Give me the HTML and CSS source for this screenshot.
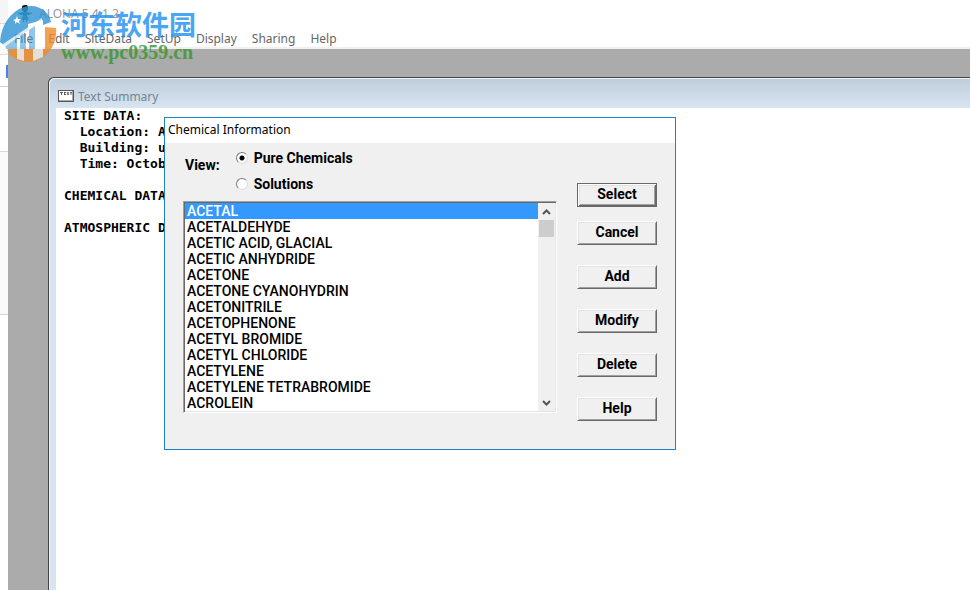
FILE: index.html
```html
<!DOCTYPE html>
<html lang="en">
<head>
    <meta charset="UTF-8">
    <meta name="viewport" content="width=device-width, initial-scale=1.0">
    <title>ALOHA 5.4.1.2</title>
    <link rel="stylesheet" href="styles.css">
</head>
<body>

    <!-- Page behind the application -->
    <div class="behind">
        <div class="behind-tabs"></div>
        <div class="behind-bar"></div>
        <div class="behind-page"><span class="behind-mark"></span></div>
        <div class="behind-panel"></div>
    </div>

    <main class="app">
        <header class="titlebar">
            <svg class="app-icon" width="16" height="18" viewBox="0 0 16 18">
                <path d="M5 1l2-1h3l1 2v3l-2 2H7L5 5z" fill="#10251c"/>
                <path d="M1 7l2 1 3-1h4l3 1 2-1v1l-3 2h-2v2H6v-2H4L1 8z" fill="#1d6e66"/>
                <path d="M6 11h4l2 3-2 1v2H9v-2H7v2H6v-2l-2-1z" fill="#218b63"/>
            </svg>
            <span>ALOHA 5.4.1.2</span>
        </header>
        <nav class="menu">
            <a href="#">File</a>
            <a href="#">Edit</a>
            <a href="#">SiteData</a>
            <a href="#">SetUp</a>
            <a href="#">Display</a>
            <a href="#">Sharing</a>
            <a href="#">Help</a>
        </nav>

        <div class="workspace">
            <section class="summary">
                <h2 class="summary-title">
                    <svg width="16" height="12" viewBox="0 0 16 12">
                        <path d="M0 0h16v12H0z" fill="#555"/>
                        <path d="M1 1h13v9H1z" fill="#fff"/>
                        <path d="M14 1h1v10H1v-1h13z" fill="#aaa"/>
                        <path d="M2 2.500h3M3.500 2v3M6 2.500h2M6 4.500h2M6.500 2v3M9 2l2 3M11 2L9 5M12 2.500h2M13 2v3" stroke="#444" stroke-width=".8" fill="none"/>
                    </svg>
                    Text Summary
                </h2>
<pre class="summary-text">SITE DATA:
  Location: ABERDEEN
  Building: unsheltered
  Time: October

CHEMICAL DATA:

ATMOSPHERIC DATA:</pre>
            </section>
        </div>
    </main>

    <!-- Chemical Information dialog -->
    <form class="dialog">
        <h1 class="dialog-title">Chemical Information</h1>
        <div class="dialog-body">
            <div class="chemicals">
                <div class="view" role="radiogroup" aria-labelledby="viewLabel">
                    <span class="view-label" id="viewLabel">View:</span>
                    <div class="view-options">
                        <label for="pure"><input type="radio" id="pure" name="view" checked>Pure Chemicals</label>
                        <label for="solutions"><input type="radio" id="solutions" name="view">Solutions</label>
                    </div>
                </div>
                <div class="list">
                    <select class="list-box" size="13" aria-label="Chemicals">
                        <option selected>ACETAL</option>
                        <option>ACETALDEHYDE</option>
                        <option>ACETIC ACID, GLACIAL</option>
                        <option>ACETIC ANHYDRIDE</option>
                        <option>ACETONE</option>
                        <option>ACETONE CYANOHYDRIN</option>
                        <option>ACETONITRILE</option>
                        <option>ACETOPHENONE</option>
                        <option>ACETYL BROMIDE</option>
                        <option>ACETYL CHLORIDE</option>
                        <option>ACETYLENE</option>
                        <option>ACETYLENE TETRABROMIDE</option>
                        <option>ACROLEIN</option>
                    </select>
                    <div class="scrollbar">
                        <svg width="15" height="17" viewBox="0 0 15 17"><path d="M4 11l3.500-3.500L11 11" fill="none" stroke="#555" stroke-width="2"/></svg>
                        <div class="scroll-thumb"></div>
                        <svg width="15" height="17" viewBox="0 0 15 17"><path d="M4 7l3.500 3.500L11 7" fill="none" stroke="#555" stroke-width="2"/></svg>
                    </div>
                </div>
            </div>
            <div class="actions">
                <div class="actions-main">
                    <button type="button" class="default">Select</button>
                    <button type="button">Cancel</button>
                </div>
                <button type="button">Add</button>
                <button type="button">Modify</button>
                <button type="button">Delete</button>
                <button type="button">Help</button>
            </div>
        </div>
    </form>

    <!-- Site watermark -->
    <div class="watermark">
        <svg width="58" height="58" viewBox="0 0 58 58">
            <path d="M0 38C2 14 18 2 31 2c11 0 19 8 20 16l-8 3v-5L28 20v6L5 42z" fill="#2f93d6"/>
            <path d="M5 41l12-9v13H6zM20 30h6v15h-6zM29 26l6-4v23h-6z" fill="#3c9bdc" fill-opacity=".7"/>
            <path d="M3 40L42 14v31h-7V21L3 44z" fill="#fff" fill-opacity=".8"/>
            <path d="M45 23l11 1c2 16-10 34-28 34-9 0-17-4-21-12l5-1h33z" fill="#f08c28"/>
            <path d="M17 45h7v12l-7-2zM33 45h10v8l-10 4z" fill="#f4ece6"/>
            <path d="M17 12l1 3 3 0-2 2 1 3-3-2-2 2v-3l-2-1 3-1z" fill="#fff"/>
        </svg>
        <div class="watermark-text">
            <span class="watermark-name" lang="zh">河东软件园</span>
            <span class="watermark-url">www.pc0359.cn</span>
        </div>
    </div>

</body>
</html>
```
FILE: styles.css
```css
* {
    box-sizing: border-box;
}

body {
    display: flex;
    height: 100vh;
    margin: 0;
    overflow: hidden;
    background-color: #fff;
    color: #000;
    font-family: "Noto Sans", "Open Sans", sans-serif;
    font-size: 12px;
}

h1, h2, pre {
    margin: 0;
    font-weight: normal;
}

/* Strip of the page behind */
.behind {
    display: flex;
    flex-direction: column;
    width: 8px;
}

.behind-tabs {
    height: 24px;
    background-color: #f5f5f5;
    border-bottom: 1px solid #ddd;
}

.behind-bar {
    height: 31px;
    background-color: #fafafa;
    border-bottom: 1px solid #ddd;
}

.behind-page {
    height: 97px;
    padding: 10px 0 0 6px;
    background: linear-gradient(#d0d0d0, #d0d0d0) 0 31px / 100% 1px no-repeat;
    border-bottom: 1px solid #d8d8d8;
}

.behind-mark {
    display: block;
    height: 13px;
    background-color: #4285f4;
}

.behind-panel {
    height: 163px;
    background-color: #fafafa;
    border-bottom: 1px solid #d8d8d8;
}

/* Application window */
.app {
    display: flex;
    flex: 1;
    flex-direction: column;
    min-width: 0;
}

.titlebar {
    display: flex;
    align-items: center;
    gap: 6px;
    height: 27px;
    padding-left: 9px;
    color: #999;
}

.menu {
    display: flex;
    gap: 15px;
    height: 22px;
    padding-left: 6px;
    border-bottom: 2px solid #f0f0f0;
    line-height: 23px;
}

.menu a {
    color: #666;
    text-decoration: none;
}

.workspace {
    display: flex;
    flex: 1;
    padding: 28px 0 0 40px;
    background-color: #ababab;
}

.summary {
    display: flex;
    flex: 1;
    flex-direction: column;
    padding-left: 7px;
    background: linear-gradient(#bfccda, #d7e4f2 30px);
    border-top: 1px solid #444;
    border-left: 1px solid #444;
    border-top-left-radius: 6px;
    box-shadow: inset 1px 1px #edf3f9;
}

.summary-title {
    display: flex;
    align-items: center;
    gap: 4px;
    height: 30px;
    padding: 6px 0 0 2px;
    color: #768390;
    font-size: 12px;
}

.summary-text {
    flex: 1;
    padding-left: 8px;
    background-color: #fff;
    font: bold 13px/16px "DejaVu Sans Mono", monospace;
}

/* Dialog */
.dialog {
    position: absolute;
    top: 117px;
    left: 164px;
    width: 512px;
    background-color: #f0f0f0;
    border: 1px solid #1c80cc;
    font-family: Roboto, Arial, sans-serif;
    font-weight: bold;
    font-size: 14px;
}

.dialog-title {
    height: 25px;
    padding-left: 3px;
    background-color: #fff;
    font: 12px/24px "Noto Sans", "Open Sans", sans-serif;
}

.dialog-body {
    display: flex;
    gap: 20px;
    padding: 2px 18px 28px;
}

.chemicals {
    flex: 1;
}

.view {
    display: flex;
    gap: 16px;
    height: 56px;
}

.view-label {
    padding-left: 2px;
    line-height: 40px;
}

.view-options label {
    display: flex;
    align-items: center;
    gap: 6px;
    height: 26px;
}

.view-options input {
    width: 12px;
    height: 12px;
    margin: 0;
    appearance: none;
    background-color: #fff;
    border: 1px solid;
    border-color: #777 #ddd #ddd #777;
    border-radius: 50%;
}

.view-options input:checked {
    background-image: radial-gradient(circle, #000 2px, transparent 3px);
}

.list {
    display: flex;
    height: 212px;
    padding: 1px;
    background-color: #fff;
    border: 1px solid;
    border-color: #a0a0a0 #fff #fff #a0a0a0;
    box-shadow: inset 1px 1px #696969, inset -1px -1px #e3e3e3;
}

.list-box {
    flex: 1;
    height: 208px;
    padding: 0;
    overflow: hidden;
    background: transparent;
    border: 0;
    border-radius: 0;
    outline: 0;
    color: #000;
    font: 14px/16px Roboto, Arial, sans-serif;
}

.list-box option {
    height: 16px;
    min-height: 16px;
    padding: 0 2px;
    font-weight: 500;
    line-height: 16px;
}

.list-box option:checked {
    background: #3399ff linear-gradient(#3399ff, #3399ff);
    color: #fff;
}

.scrollbar {
    display: flex;
    flex-direction: column;
    width: 17px;
    padding: 0 1px;
    background-color: #f0f0f0;
}

.scroll-thumb {
    height: 17px;
    margin-bottom: auto;
    background-color: #cdcdcd;
}

.actions {
    display: flex;
    flex-direction: column;
    gap: 20px;
    width: 80px;
    padding-top: 38px;
}

.actions-main {
    display: flex;
    flex-direction: column;
    gap: 14px;
}

.actions button {
    width: 80px;
    height: 24px;
    padding: 0 0 2px;
    background-color: #f0f0f0;
    border: 1px solid;
    border-color: #fff #696969 #696969 #fff;
    box-shadow: inset 1px 1px #e3e3e3, inset -1px -1px #a0a0a0;
    color: #000;
    font: bold 14px Roboto, Arial, sans-serif;
}

.actions .default {
    border-color: #696969;
    box-shadow: inset 1px 1px #fff, inset -1px -1px #696969, inset 2px 2px #e3e3e3, inset -2px -2px #a0a0a0;
}

/* Watermark */
.watermark {
    position: absolute;
    top: 4px;
    left: 0;
    display: flex;
    gap: 3px;
    opacity: 0.8;
    pointer-events: none;
}

.watermark-text {
    display: flex;
    flex-direction: column;
    padding-top: 4px;
}

.watermark-name {
    color: #1e90f0;
    font: bold 27px/32px "Noto Sans CJK SC", sans-serif;
}

.watermark-url {
    color: #36962a;
    font: bold 20px/24px "Liberation Serif", serif;
}
```
